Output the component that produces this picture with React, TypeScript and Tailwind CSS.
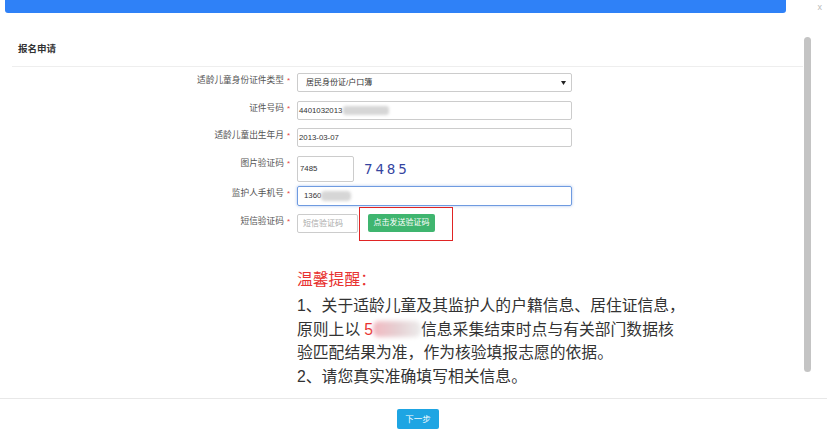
import type { ReactNode } from 'react'

const font = 'font-["Liberation_Sans","Noto_Sans_CJK_SC",sans-serif]'

function Row({ label, className, children }: { label: string; className: string; children: ReactNode }) {
  return (
    <div className={`flex items-start ${className}`}>
      <div className="w-[278px] shrink-0 text-right text-[8.7px] leading-[14px] text-[#555]">
        {label}
        <span className="ml-[3px] text-[8px] text-[#e54545]">*</span>
      </div>
      <div className="ml-[7px] flex h-full items-start">{children}</div>
    </div>
  )
}

export default function App() {
  return (
    <div className={`flex h-[434px] w-[827px] flex-col overflow-hidden bg-white ${font}`}>
      {/* Top bar */}
      <div className="flex h-[13px] shrink-0 items-start">
        <div className="ml-[5px] h-[13px] w-[781px] rounded-b-[3px] bg-[#2f81f7]" />
        <span className="ml-auto mr-[5px] mt-[2px] text-[9px] leading-[10px] text-[#bbb]">x</span>
      </div>

      {/* Body */}
      <div className="flex h-[385px] shrink-0">
        <div className="flex-1 pl-[12px]">
          {/* Section header */}
          <div className="box-border h-[54px] border-b border-[#eee] pl-[6px] pt-[30px] text-[9.5px] font-bold leading-[12px] text-[#333]">
            报名申请
          </div>

          {/* Form */}
          <Row label="适龄儿童身份证件类型" className="mt-[6px] h-[19px]">
            <div className="relative flex h-[19px] w-[275px] items-center rounded-[2px] border border-[#ccc] pl-[8px] text-[8px] text-[#333]">
              居民身份证/户口簿
              <svg className="absolute right-[5px] top-[7px]" width="5" height="4" viewBox="0 0 5 4">
                <path d="M0 0h5L2.5 4z" fill="#222" />
              </svg>
            </div>
          </Row>

          <Row label="证件号码" className="mt-[9px] h-[19px]">
            <div className="flex h-[19px] w-[275px] items-center rounded-[2px] border border-[#ccc] pl-[1px] text-[7.8px] text-[#333]">
              4401032013
              <span className="ml-[1px] h-[9px] w-[46px] rounded-[3px] bg-[#d6d6d6] blur-[1.5px]" />
            </div>
          </Row>

          <Row label="适龄儿童出生年月" className="mt-[8px] h-[19px]">
            <div className="flex h-[19px] w-[275px] items-center rounded-[2px] border border-[#ccc] pl-[1px] text-[7.8px] text-[#333]">
              2013-03-07
            </div>
          </Row>

          <Row label="图片验证码" className="mt-[9px] h-[26px]">
            <div className="flex h-[26px] w-[57px] items-center rounded-[2px] border border-[#ccc] pl-[2px] text-[7.8px] text-[#333]">
              7485
            </div>
            <span className='ml-[10px] mt-[5px] font-["DejaVu_Sans",sans-serif] text-[13.5px] leading-[16px] tracking-[2.8px] text-[#34449f]'>
              7485
            </span>
          </Row>

          <Row label="监护人手机号" className="mt-[4px] h-[20px]">
            <div className="flex h-[20px] w-[275px] items-center rounded-[2px] border border-[#6f9be0] pl-[6px] text-[7.8px] text-[#333] shadow-[0_0_3px_rgba(80,130,220,0.5)]">
              1360
              <span className="h-[10px] w-[30px] rounded-[4px] bg-[#d6d6d6] blur-[1.5px]" />
            </div>
          </Row>

          <Row label="短信验证码" className="mt-[8px] h-[19px]">
            <div className="flex h-[19px] w-[61px] items-center rounded-[2px] border border-[#ccc] pl-[5px] text-[8px] text-[#aaa]">
              短信验证码
            </div>
            <div className="relative ml-[10px] flex">
              <button className="block h-[18px] w-[67px] rounded-[2px] bg-[#3fb56f] text-[8px] leading-[18px] text-white">
                点击发送验证码
              </button>
              <span className="absolute -left-[9px] -right-[18px] -top-[7px] -bottom-[9px] border-[1.5px] border-[#e02424]" />
            </div>
          </Row>

          {/* Reminder */}
          <div className="ml-[285px] mt-[35px] text-[15.8px] text-[#333]">
            <div className="text-[#e8312f] leading-[24px]">温馨提醒：</div>
            <div className="mt-[2px] whitespace-nowrap leading-[23.5px]">
              <div>1、关于适龄儿童及其监护人的户籍信息、居住证信息，</div>
              <div className="flex items-center">
                <span>原则上以</span>
                <span className="ml-[4px] text-[#e8312f]">5</span>
                <span className="h-[16px] w-[48px] rounded-[6px] bg-[linear-gradient(90deg,#f2b9c1,#e6cfd2,#ececec)] blur-[2px]" />
                <span>信息采集结束时点与有关部门数据核</span>
              </div>
              <div>验匹配结果为准，作为核验填报志愿的依据。</div>
              <div>2、请您真实准确填写相关信息。</div>
            </div>
          </div>
        </div>

        {/* Scrollbar */}
        <div className="w-[24px] shrink-0">
          <div className="ml-[1px] mt-[24px] h-[335px] w-[7px] rounded-full bg-[#c4c4c4]" />
        </div>
      </div>

      {/* Footer */}
      <div className="flex h-[36px] shrink-0 justify-center border-t border-[#e8e8e8] pl-[9px] pt-[10px]">
        <button className="block h-[20px] w-[42px] rounded-[2px] bg-[#1ea5e3] text-[8.5px] leading-[20px] text-white">下一步</button>
      </div>
    </div>
  )
}
